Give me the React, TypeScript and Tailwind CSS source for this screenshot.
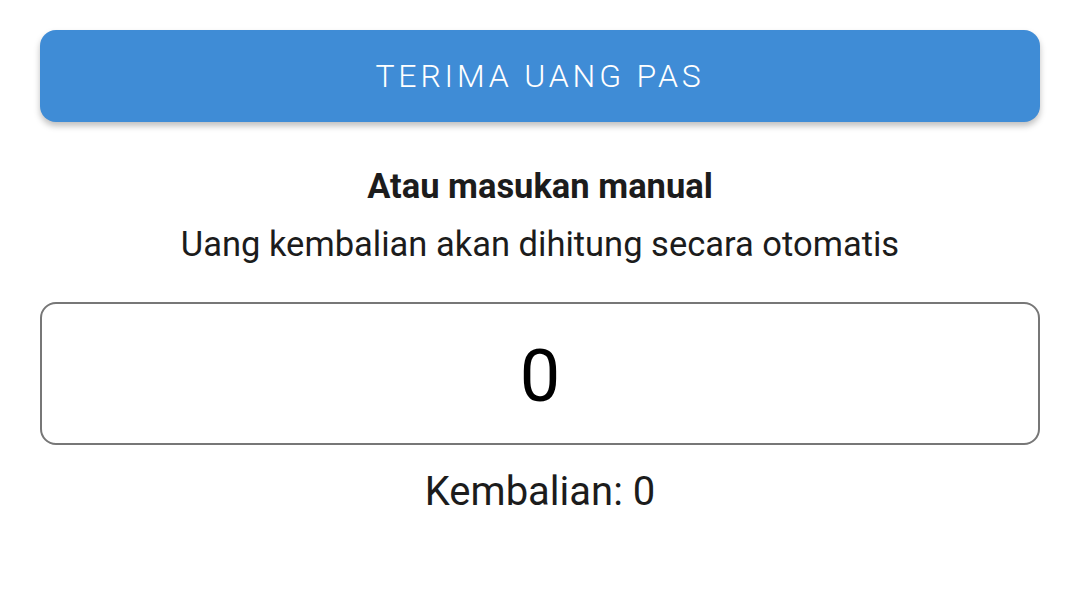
import React from 'react';

export default function App() {
  const font = { fontFamily: 'Roboto, "Noto Sans", sans-serif' };

  return (
    <div className="w-[1080px] h-[599px] bg-white px-10 pt-[30px]" style={font}>
      <button className="w-full h-[92px] rounded-[16px] bg-[#3f8cd6] text-white text-[32px] font-light tracking-[0.12em] shadow-[0_4px_6px_rgba(0,0,0,0.25)]">
        TERIMA UANG PAS
      </button>

      <div className="mt-[42px] flex flex-col items-center text-[#1c1c1c]">
        <h2 className="text-[34.5px] font-bold leading-[44px]">Atau masukan manual</h2>
        <p className="mt-[14px] text-[34.5px] leading-[44px]">Uang kembalian akan dihitung secara otomatis</p>
      </div>

      <div className="mt-[36px] h-[143px] rounded-[16px] border-2 border-[#777777] flex items-center justify-center pt-[6px]">
        <span className="text-[72px] text-black leading-none">0</span>
      </div>

      <p className="mt-[22px] text-center text-[40px] text-[#1c1c1c] leading-[50px]">Kembalian: 0</p>
    </div>
  );
}
